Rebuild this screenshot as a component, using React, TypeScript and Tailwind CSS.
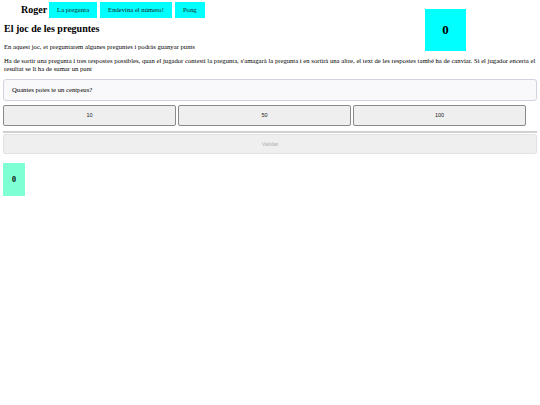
import React from "react";

export default function App() {
  const answers = ["10", "50", "100"];
  return (
    <div className="relative w-[540px] h-[405px] bg-white text-black font-['Liberation_Serif',serif]">
      <nav className="flex items-center h-[16px] mt-[2px] pl-[21px] gap-[3px]">
        <span className="text-[10px] font-bold leading-none mr-[-1px]">Roger</span>
        <button className="h-[16px] px-[8px] bg-[#00ffff] text-[6.67px] text-[#222]">La pregunta</button>
        <button className="h-[16px] px-[8px] bg-[#00ffff] text-[6.67px] text-[#222]">Endevina el número!</button>
        <button className="h-[16px] px-[8px] bg-[#00ffff] text-[6.67px] text-[#222]">Pong</button>
      </nav>
      <div className="absolute left-[425px] top-[7px] w-[41px] h-[42px] bg-[#00ffff] flex items-center justify-center text-[13px] font-bold">
        0
      </div>
      <main className="px-[3px]">
        <h2 className="mt-[5px] pl-[1px] text-[10px] font-bold leading-[12px]">El joc de les preguntes</h2>
        <p className="mt-[8px] pl-[1px] text-[6.67px] leading-[8px]">
          En aquest joc, et preguntarem algunes preguntes i podràs guanyar punts
        </p>
        <p className="mt-[6px] pl-[1px] text-[6.67px] leading-[8px]">
          Ha de sortir una pregunta i tres respostes possibles, quan el jugador contesti la pregunta, s'amagarà la pregunta i en sortirà una altre, el text de les respostes també ha de canviar. Si el jugador encerta el resultat se li ha de sumar un punt
        </p>
        <div className="mt-[6px] h-[22px] flex items-center pl-[8px] border border-[#d3d3de] rounded-[3px] bg-[#f9f9fb] text-[6.67px]">
          Quantes potes te un centpeus?
        </div>
        <div className="mt-[4px] flex gap-[2px]">
          {answers.map((a) => (
            <button
              key={a}
              className="w-[173px] h-[21px] bg-[#efefef] border border-[#8a8a8a] rounded-[2px] font-['Liberation_Sans',sans-serif] text-[5.5px] text-[#222]"
            >
              {a}
            </button>
          ))}
        </div>
        <hr className="mt-[5px] border-t-[2px] border-[#d0d0d0]" />
        <button
          disabled
          className="block mt-[1px] w-full h-[20px] bg-[#efefef] border border-[#e2e2e2] rounded-[2px] font-['Liberation_Sans',sans-serif] text-[5.5px] text-[#b0b0b0]"
        >
          Validar
        </button>
        <div className="mt-[9px] w-[22px] h-[33px] bg-[#7fffd4] flex items-center justify-center text-[8px] font-bold">
          0
        </div>
      </main>
    </div>
  );
}
